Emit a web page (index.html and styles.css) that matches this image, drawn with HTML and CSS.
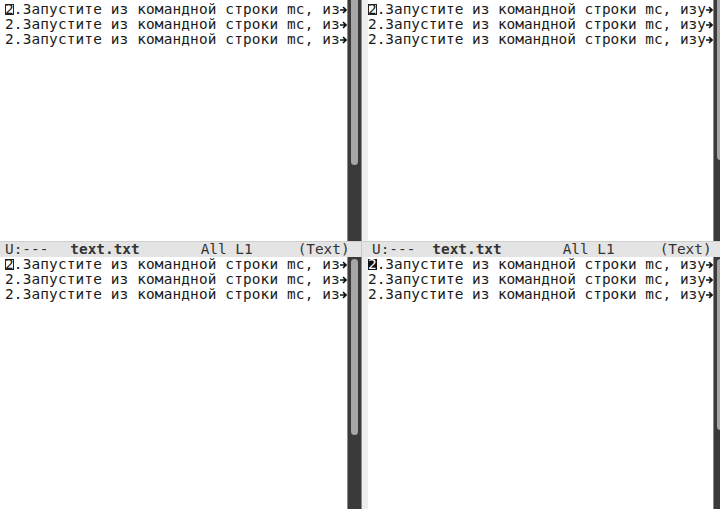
FILE: index.html
```html
<!DOCTYPE html>
<html lang="ru">
<head>
  <meta charset="UTF-8" />
  <title>text.txt - emacs</title>
  <link rel="stylesheet" href="styles.css">
</head>
<body>

<div class="frame">

  <!-- top left -->
  <div class="window left">
    <div class="pane top">
      <div class="text">
        <div class="line"><span class="t"><span class="cur hollow">2</span>.Запустите из командной строки mc, из</span><svg class="arrow" viewBox="0 0 7 8"><path d="M0 4H5M3 1L6 4L3 7" /></svg></div>
        <div class="line"><span class="t">2.Запустите из командной строки mc, из</span><svg class="arrow" viewBox="0 0 7 8"><path d="M0 4H5M3 1L6 4L3 7" /></svg></div>
        <div class="line"><span class="t">2.Запустите из командной строки mc, из</span><svg class="arrow" viewBox="0 0 7 8"><path d="M0 4H5M3 1L6 4L3 7" /></svg></div>
      </div>
      <div class="scroll"><div class="thumb thumb-top"></div></div>
    </div>
    <div class="modeline">
      <span class="m-state">U:---</span>
      <span class="m-name">text.txt</span>
      <span class="m-pos">All L1</span>
      <span class="m-mode">(Text)</span>
    </div>
  </div>

  <!-- top right -->
  <div class="window right">
    <div class="pane top">
      <div class="fringe"></div>
      <div class="text">
        <div class="line"><span class="t"><span class="cur hollow">2</span>.Запустите из командной строки mc, изу</span><svg class="arrow" viewBox="0 0 7 8"><path d="M0 4H5M3 1L6 4L3 7" /></svg></div>
        <div class="line"><span class="t">2.Запустите из командной строки mc, изу</span><svg class="arrow" viewBox="0 0 7 8"><path d="M0 4H5M3 1L6 4L3 7" /></svg></div>
        <div class="line"><span class="t">2.Запустите из командной строки mc, изу</span><svg class="arrow" viewBox="0 0 7 8"><path d="M0 4H5M3 1L6 4L3 7" /></svg></div>
      </div>
      <div class="scroll"><div class="thumb thumb-top"></div></div>
    </div>
    <div class="modeline">
      <span class="m-state">U:---</span>
      <span class="m-name">text.txt</span>
      <span class="m-pos">All L1</span>
      <span class="m-mode">(Text)</span>
    </div>
  </div>

  <!-- bottom left -->
  <div class="window left">
    <div class="pane bottom">
      <div class="text">
        <div class="line"><span class="t"><span class="cur hollow">2</span>.Запустите из командной строки mc, из</span><svg class="arrow" viewBox="0 0 7 8"><path d="M0 4H5M3 1L6 4L3 7" /></svg></div>
        <div class="line"><span class="t">2.Запустите из командной строки mc, из</span><svg class="arrow" viewBox="0 0 7 8"><path d="M0 4H5M3 1L6 4L3 7" /></svg></div>
        <div class="line"><span class="t">2.Запустите из командной строки mc, из</span><svg class="arrow" viewBox="0 0 7 8"><path d="M0 4H5M3 1L6 4L3 7" /></svg></div>
      </div>
      <div class="scroll"><div class="thumb thumb-bottom"></div></div>
    </div>
  </div>

  <!-- bottom right (active) -->
  <div class="window right">
    <div class="pane bottom">
      <div class="fringe"></div>
      <div class="text">
        <div class="line"><span class="t"><span class="cur solid">2</span>.Запустите из командной строки mc, изу</span><svg class="arrow" viewBox="0 0 7 8"><path d="M0 4H5M3 1L6 4L3 7" /></svg></div>
        <div class="line"><span class="t">2.Запустите из командной строки mc, изу</span><svg class="arrow" viewBox="0 0 7 8"><path d="M0 4H5M3 1L6 4L3 7" /></svg></div>
        <div class="line"><span class="t">2.Запустите из командной строки mc, изу</span><svg class="arrow" viewBox="0 0 7 8"><path d="M0 4H5M3 1L6 4L3 7" /></svg></div>
      </div>
      <div class="scroll"><div class="thumb thumb-bottom"></div></div>
    </div>
  </div>

</div>

</body>
</html>
```

FILE: styles.css
```css
html, body {
  margin: 0;
  padding: 0;
  background: #fff;
  color: #1a1a1a;
  font-family: 'DejaVu Sans Mono', 'Liberation Mono', monospace;
  font-size: 14.4px;
  overflow: hidden;
}

.frame {
  display: grid;
  grid-template-columns: 362px 358px;
  grid-template-rows: 257px 252px;
  width: 720px;
  height: 509px;
  overflow: hidden;
}

.window {
  display: flex;
  flex-direction: column;
  overflow: hidden;
  min-width: 0;
}

.pane {
  display: flex;
  flex: 1;
  min-height: 0;
}

.pane.top {
  height: 241px;
  flex: none;
}

.text {
  flex: 1;
  min-width: 0;
  line-height: 15px;
  letter-spacing: 0.15px;
}

.right .text {
  letter-spacing: 0;
}

.pane.top .text {
  padding-top: 2px;
}

.left .text {
  padding-left: 5px;
}

.fringe {
  width: 6px;
  background: #eeeeee;
  flex: none;
}

.line {
  display: flex;
  align-items: center;
  height: 15px;
}

.line .t {
  flex: 1;
  white-space: nowrap;
}

.cur {
  display: inline-block;
  line-height: 11px;
  height: 11px;
}

.cur.hollow {
  outline: 1px solid #222;
  outline-offset: -1px;
}

.cur.solid {
  background: #111;
  color: #fff;
}

.arrow {
  flex: none;
  width: 7px;
  height: 8px;
  margin-right: 1px;
  fill: none;
  stroke: #111;
  stroke-width: 1.6;
}

.right .arrow {
  margin-right: 0;
}

.scroll {
  flex: none;
  width: 13px;
  background: #3a3a3a;
  border-left: 1px solid #8a8a8a;
  border-right: 1px solid #8a8a8a;
  position: relative;
}

.right .scroll {
  margin-right: -8px;
}

.thumb {
  position: absolute;
  left: 3px;
  width: 7px;
  background: #a6a6a6;
  border-radius: 0 0 4px 4px;
}

.thumb-top {
  top: 0;
  height: 165px;
}

.thumb-bottom {
  top: 2px;
  height: 176px;
  border-radius: 4px;
}

.right .thumb-top {
  height: 160px;
}

.right .thumb-bottom {
  height: 171px;
}

.modeline {
  height: 16px;
  flex: none;
  background: #e4e4e4;
  border-top: 1px solid #cfcfcf;
  box-sizing: border-box;
  color: #333;
  font-size: 14.4px;
  line-height: 15px;
  display: flex;
  white-space: nowrap;
}

.left .modeline {
  padding-left: 5px;
  border-right: 1px solid #c8c8c8;
}

.right .modeline {
  padding-left: 10px;
}

.m-name {
  font-weight: bold;
  margin-left: 22px;
}

.right .m-name {
  margin-left: 17px;
}

.m-pos {
  margin-left: 61px;
}

.m-mode {
  margin-left: 45px;
}
```
